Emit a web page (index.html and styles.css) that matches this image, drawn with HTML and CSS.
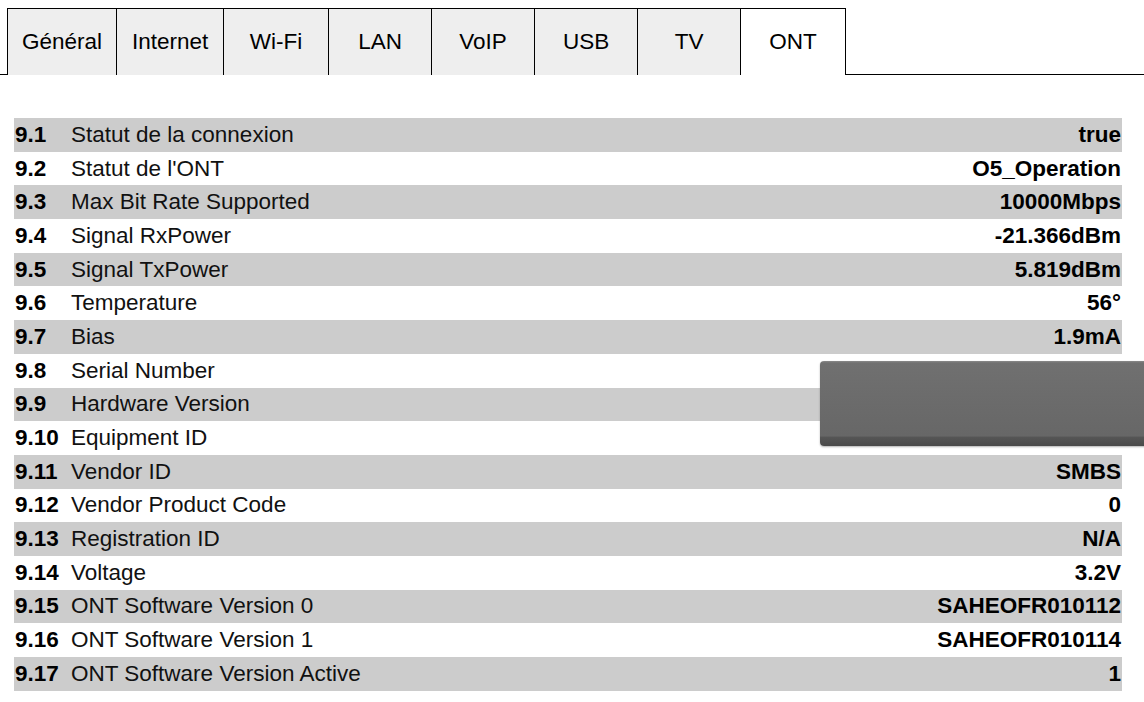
FILE: index.html
```html
<!DOCTYPE html>
<html lang="fr">
<head>
<meta charset="utf-8">
<title>ONT</title>
<link rel="stylesheet" href="styles.css">
</head>
<body>
<div class="tabs">
  <div class="tab">Général</div>
  <div class="tab">Internet</div>
  <div class="tab">Wi-Fi</div>
  <div class="tab">LAN</div>
  <div class="tab">VoIP</div>
  <div class="tab">USB</div>
  <div class="tab">TV</div>
  <div class="tab active">ONT</div>
</div>
<div class="content">
  <div class="list">
    <div class="row"><span class="num">9.1</span><span class="label">Statut de la connexion</span><span class="val">true</span></div>
    <div class="row"><span class="num">9.2</span><span class="label">Statut de l'ONT</span><span class="val">O5_Operation</span></div>
    <div class="row"><span class="num">9.3</span><span class="label">Max Bit Rate Supported</span><span class="val">10000Mbps</span></div>
    <div class="row"><span class="num">9.4</span><span class="label">Signal RxPower</span><span class="val">-21.366dBm</span></div>
    <div class="row"><span class="num">9.5</span><span class="label">Signal TxPower</span><span class="val">5.819dBm</span></div>
    <div class="row"><span class="num">9.6</span><span class="label">Temperature</span><span class="val">56°</span></div>
    <div class="row"><span class="num">9.7</span><span class="label">Bias</span><span class="val">1.9mA</span></div>
    <div class="row"><span class="num">9.8</span><span class="label">Serial Number</span><span class="val"></span></div>
    <div class="row"><span class="num">9.9</span><span class="label">Hardware Version</span><span class="val"></span></div>
    <div class="row"><span class="num">9.10</span><span class="label">Equipment ID</span><span class="val"></span></div>
    <div class="row"><span class="num">9.11</span><span class="label">Vendor ID</span><span class="val">SMBS</span></div>
    <div class="row"><span class="num">9.12</span><span class="label">Vendor Product Code</span><span class="val">0</span></div>
    <div class="row"><span class="num">9.13</span><span class="label">Registration ID</span><span class="val">N/A</span></div>
    <div class="row"><span class="num">9.14</span><span class="label">Voltage</span><span class="val">3.2V</span></div>
    <div class="row"><span class="num">9.15</span><span class="label">ONT Software Version 0</span><span class="val">SAHEOFR010112</span></div>
    <div class="row"><span class="num">9.16</span><span class="label">ONT Software Version 1</span><span class="val">SAHEOFR010114</span></div>
    <div class="row"><span class="num">9.17</span><span class="label">ONT Software Version Active</span><span class="val">1</span></div>
  </div>
  <div class="redact"></div>
</div>
</body>
</html>
```
FILE: styles.css
```css
html, body {
  margin: 0;
  padding: 0;
  background: #fff;
}
body {
  font-family: "Liberation Sans", Arial, sans-serif;
  font-size: 22.5px;
  color: #000;
  width: 1144px;
  height: 702px;
  overflow: hidden;
}
.tabs {
  display: flex;
  padding: 8px 0 0 7px;
  border-bottom: 1px solid #000;
  height: 66px;
}
.tab {
  box-sizing: border-box;
  height: 67px;
  min-width: 103px;
  padding: 0 14px 1px;
  margin-bottom: -1px;
  border: 1px solid #000;
  border-bottom: none;
  border-left: none;
  background: #eeeeee;
  display: flex;
  align-items: center;
  justify-content: center;
}
.tab:first-child {
  border-left: 1px solid #000;
  min-width: 109px;
}
.tab:nth-child(2) {
  min-width: 107px;
}
.tab:nth-child(3) {
  min-width: 105px;
}
.tab.active {
  background: #fff;
  min-width: 105px;
}
.content {
  position: relative;
  padding: 43px 22px 0 14px;
}
.list {
  display: flex;
  flex-direction: column;
}
.row {
  display: grid;
  grid-template-columns: 57px 1fr auto;
  height: 33.7px;
  align-items: center;
}
.row:nth-child(odd) {
  background: #cccccc;
}
.num {
  font-weight: bold;
  padding-left: 1px;
}
.label {
  color: #111;
}
.val {
  font-weight: bold;
  text-align: right;
  padding-right: 1px;
}
.redact {
  position: absolute;
  left: 820px;
  top: 286px;
  width: 330px;
  height: 85px;
  border-radius: 4px;
  background: linear-gradient(to bottom, #8a8a8a 0px, #707070 2px, #6c6c6c 40%, #676767 88%, #555555 90%, #4a4a4a 100%);
  box-shadow: 0 1px 2px rgba(0, 0, 0, 0.3);
}
```
